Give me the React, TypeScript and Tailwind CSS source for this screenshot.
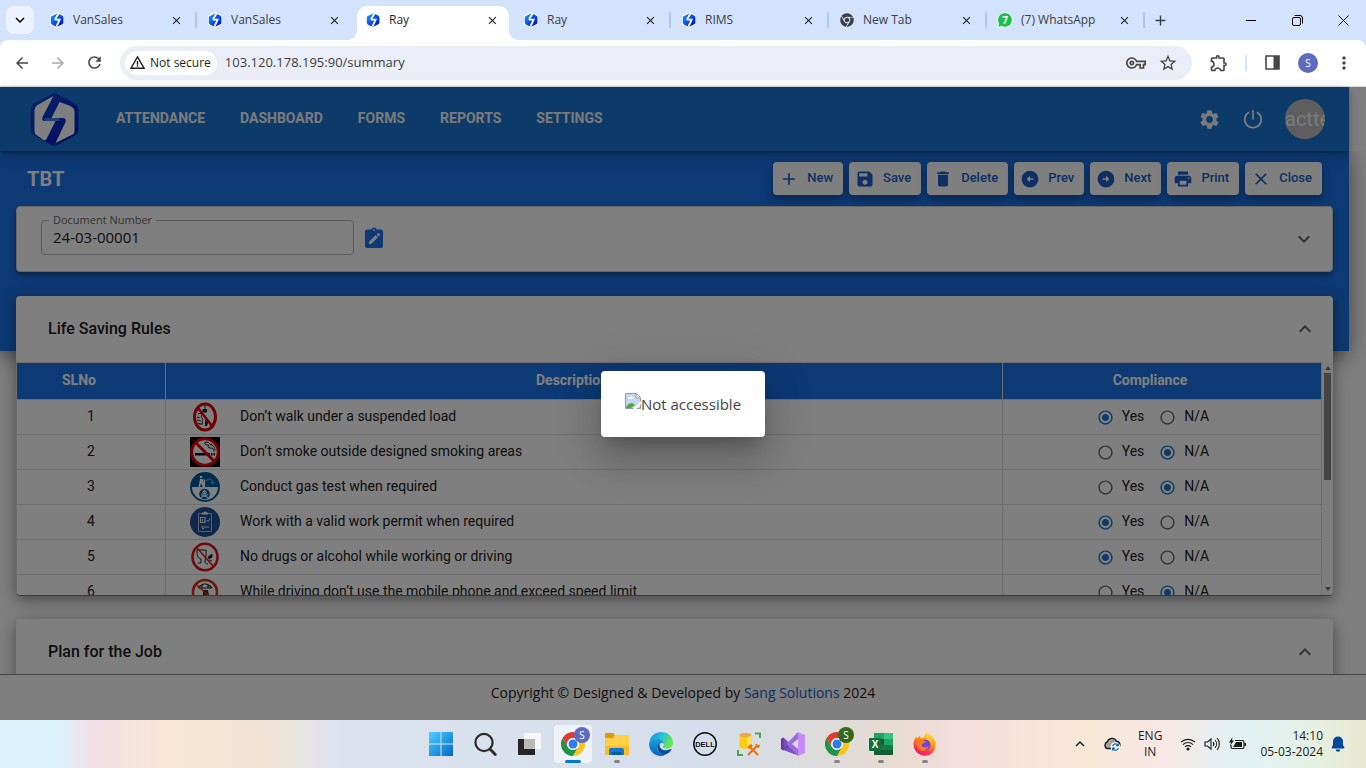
import { ReactNode, useState } from "react";
import { FaChrome } from "react-icons/fa";
import {
  MdAdd,
  MdArrowBack,
  MdArrowCircleLeft,
  MdArrowCircleRight,
  MdArrowForward,
  MdClose,
  MdDelete,
  MdExpandLess,
  MdExpandMore,
  MdMoreVert,
  MdOutlineExtension,
  MdOutlineVpnKey,
  MdPrint,
  MdRadioButtonChecked,
  MdRadioButtonUnchecked,
  MdRefresh,
  MdSave,
  MdSettings,
  MdStarBorder,
  MdWarningAmber,
} from "react-icons/md";

interface ITab {
  title: string;
  icon: ReactNode;
  active?: boolean;
}

interface IRule {
  id: number;
  text: string;
  sign: ReactNode;
  compliance: "Yes" | "N/A";
}

/* ---------- Logos ---------- */

const Favicon = () => (
  <svg viewBox="0 0 16 16" className="w-4 h-4 shrink-0">
    <defs>
      <linearGradient id="fav" x1="0" y1="0" x2="1" y2="1">
        <stop offset="0" stopColor="#1aa0ff" />
        <stop offset="1" stopColor="#0000c8" />
      </linearGradient>
    </defs>
    <path d="M8 0 15 3.5v9L8 16 1 12.5v-9z" fill="#fff" />
    <path d="M8.6 1.2 2.4 4.2 1.8 5v6l1 1.6 5 2.4 6-3 .6-1V5l-.8-1.2z" fill="url(#fav)" />
    <path d="M9.8 1 6.4 6.6 6.6 7.6h4L7.4 14.6" fill="none" stroke="#fff" strokeWidth="1.8" />
  </svg>
);

const SangLogo = () => (
  <svg viewBox="0 0 48 54" className="w-[49px] h-[54px]">
    <defs>
      <linearGradient id="sang" x1="0" y1="0" x2="1" y2="1">
        <stop offset="0" stopColor="#0a50c8" />
        <stop offset="0.5" stopColor="#0a30d0" />
        <stop offset="1" stopColor="#0418b8" />
      </linearGradient>
    </defs>
    <path d="M21 2q3-2 6 0l18 10q3 2 3 5v21q0 3-3 5L27 53q-3 1-6 0L3 43q-3-2-3-5V17q0-3 3-5z" fill="url(#sang)" />
    <path d="M23 4 7 13q-3 2-3 5v21q0 3 2 4l7 5q2 1 3-1l9-18H14q-3 0-2-4z" fill="#fff" />
    <path d="m29 10 11 4q4 2 4 6v19q0 3-3 4l-16 8 10-21q1-4-3-4H21z" fill="#fff" />
    <path d="M14 27.500h15" stroke="#3f7fe0" strokeWidth="3" />
  </svg>
);

const ChromeLogo = () => (
  <svg viewBox="0 0 48 48" className="w-6 h-6">
    <path d="M13.6 30 3.2 12A24 24 0 0 0 24 48l10.4-18A12 12 0 0 1 13.6 30z" fill="#1e9546" />
    <path d="M34.4 30 24 48a24 24 0 0 0 20.8-36H24a12 12 0 0 1 10.4 18z" fill="#fcc31e" />
    <path d="M24 12h20.8A24 24 0 0 0 3.2 12l10.4 18A12 12 0 0 1 24 12z" fill="#e33b2e" />
    <circle cx="24" cy="24" r="11.5" fill="#fff" />
    <circle cx="24" cy="24" r="9" fill="#2f7bf0" />
  </svg>
);

const WindowsLogo = () => (
  <svg viewBox="0 0 24 24" className="w-6 h-6">
    <defs>
      <linearGradient id="win" x1="0" y1="0" x2="1" y2="1">
        <stop offset="0" stopColor="#4fd0ff" />
        <stop offset="1" stopColor="#0067c8" />
      </linearGradient>
    </defs>
    <path d="M0 0h11.5v11.5H0zM12.5 0H24v11.5H12.5zM0 12.5h11.5V24H0zM12.5 12.5H24V24H12.5z" fill="url(#win)" />
  </svg>
);

const SearchLogo = () => (
  <svg viewBox="0 0 24 24" className="w-6 h-6" fill="none" stroke="#2b2b2b" strokeLinecap="round">
    <circle cx="11" cy="10.5" r="8.6" strokeWidth="2.2" />
    <path d="m17.5 17.5 4.8 5" strokeWidth="2.8" />
  </svg>
);

const TaskViewLogo = () => (
  <svg viewBox="0 0 24 24" className="w-6 h-6">
    <rect x="7" y="1" width="17" height="16" fill="#f7f7f7" />
    <rect x="1" y="7" width="17" height="16" fill="#262626" />
    <rect x="7" y="7" width="11" height="10" fill="#b9b9b9" />
  </svg>
);

const FolderLogo = () => (
  <svg viewBox="0 0 24 24" className="w-6 h-6">
    <path d="M0 2q0-1 1-1h7l2 2-2 4H0z" fill="#dd9a0b" />
    <path d="M0 6h8l2-3h14v20H0z" fill="#ffcf48" />
    <path d="M0 14h24v9H0z" fill="#fbbd2a" />
    <path d="M4 23v-5q0-2 2-2h11q2 0 2 2v5z" fill="#0f78d0" />
    <path d="M7 20h9v3H7z" fill="#0b59a5" />
  </svg>
);

const EdgeLogo = () => (
  <svg viewBox="0 0 24 24" className="w-6 h-6">
    <defs>
      <linearGradient id="edgeTop" x1="0" y1="0" x2="1" y2="0.4">
        <stop offset="0" stopColor="#0f8fe0" />
        <stop offset="0.55" stopColor="#28c3d8" />
        <stop offset="1" stopColor="#65e84c" />
      </linearGradient>
      <linearGradient id="edgeLeft" x1="0" y1="0" x2="0" y2="1">
        <stop offset="0" stopColor="#1b9fe2" />
        <stop offset="1" stopColor="#0c5fc0" />
      </linearGradient>
    </defs>
    <path d="M.3 10.5C1.2 4 6.400 0 12 0c7 0 12 5 12 10.500 0 4-3 6-6.200 6-2.600 0-4-.8-4-1.700 0-.7 1-1.200 1-3C14.800 9 12 7 8.600 7 4.500 7 1.200 9 .3 10.500z" fill="url(#edgeTop)" />
    <path d="M.1 12C.1 9 4 6.700 8.200 6.700c4 0 6.600 2.600 6.600 5C14 10.500 9 10 8.500 15.500c-.3 4 3 7.500 7.500 7.200C14.800 23.600 13.300 24 12 24 5 24 0 18.500.1 12z" fill="url(#edgeLeft)" />
    <path d="M8.500 14.500c-.3 5 3.500 9 7.500 8.300 3-.8 5.200-3 6.500-5.200.3-.6-.2-.8-.7-.5-4 2-10.500 1.500-11.200-3.700-.2-1.300.6-2.400 1.400-3-2 .4-3.400 2-3.500 4.100z" fill="#0d4f94" />
  </svg>
);

const DellLogo = () => (
  <svg viewBox="0 0 24 24" className="w-6 h-6">
    <circle cx="12" cy="12" r="11.2" fill="none" stroke="#111" strokeWidth="1.5" />
    <text x="12" y="14.700" textAnchor="middle" fontSize="7.500" fontWeight="700" fontFamily="Liberation Sans, sans-serif" fill="#111">DELL</text>
  </svg>
);

const SsmsLogo = () => (
  <svg viewBox="0 0 24 24" className="w-6 h-6">
    <path d="M18 1.500h5V6M1 18v5h5" fill="none" stroke="#4da64d" strokeWidth="2" />
    <path d="M2.500 3v12.500c0 1.500 12 1.500 12 0V3z" fill="#fccb12" />
    <path d="M10 3v13.500c3 0 4.500-.5 4.500-1V3z" fill="#ffdf55" />
    <ellipse cx="8.500" cy="3" rx="6" ry="2.200" fill="#efa64a" />
    <path d="m11 23 9-9M12 14l9 9" stroke="#e8730c" strokeWidth="2" />
    <path d="m18 12 1 3 3 1 1-3M10 15l4-3 2 2-4 3z" fill="#e8730c" />
  </svg>
);

const VisualStudioLogo = () => (
  <svg viewBox="0 0 24 24" className="w-6 h-6">
    <path d="M0 7 2.500 5.500 16 18l-.5 5L2.500 18 0 17z" fill="#7d4fc0" />
    <path d="M0 17 2.500 18.500 17 6V1L2.500 18 0 17z" fill="#5b3b98" />
    <path d="M0 7v10l2.500 1.500V5.500z" fill="#5b3b98" />
    <path d="M17 0 5.500 12 17 24z" fill="#9b6be0" />
    <path d="M17 7v10l-6-5z" fill="#d6dfec" />
    <path d="m17 0 7 3v18l-7 3z" fill="#c58cf7" />
  </svg>
);

const ExcelLogo = () => (
  <svg viewBox="0 0 24 24" className="w-6 h-6">
    <path d="M5 1h10v6H5z" fill="#21a366" />
    <path d="M15 1h9v6h-9z" fill="#33c481" />
    <path d="M5 7h10v6H5zM5 18h19v5H5z" fill="#185c37" />
    <path d="M15 7h9v6h-9z" fill="#21a366" />
    <path d="M5 13h19v5H5z" fill="#107c41" />
    <rect y="6" width="12" height="13" rx="1" fill="#0f7038" />
    <text x="6" y="16" textAnchor="middle" fontSize="10" fontWeight="700" fontFamily="Liberation Sans, sans-serif" fill="#fff">X</text>
  </svg>
);

const FirefoxLogo = () => (
  <svg viewBox="0 0 24 24" className="w-6 h-6">
    <defs>
      <linearGradient id="fox" x1="0.8" y1="0" x2="0.3" y2="1">
        <stop offset="0" stopColor="#fff044" />
        <stop offset="0.4" stopColor="#ff980e" />
        <stop offset="0.75" stopColor="#ff3647" />
        <stop offset="1" stopColor="#e31587" />
      </linearGradient>
    </defs>
    <path d="M13.500 0c1.500 3 7.500 4 8.800 9.500 2 8-3.600 14.300-10.300 14.300C5.500 23.800.600 19 .600 12.600.600 9 2 6 3.300 4.800l.7 2C5 5 6.500 4 7.200 3.500c0 1 .3 2 1 2.700C11 6 12 3 13.500 0z" fill="url(#fox)" />
    <circle cx="12" cy="13" r="5.500" fill="#7542e5" />
    <path d="M4 8c3-1.500 5-1 6.500.8C13 8.500 13 10 11 11c-1 .5-2.500.5-2.300 2.300.5 2.500 4.600 2.700 6.800 1-1 3.700-4 5.200-7 4.400C4 17.500 2.500 12 4 8z" fill="#ff7a18" />
    <path d="M14 3c1 4 6 5 5.500 11-.5-3-2.500-6-5-6.500-1.500-1-1.500-3-.5-4.500z" fill="#ffd235" />
  </svg>
);

/* ---------- Small icons ---------- */

const EditDocIcon = () => (
  <svg viewBox="0 0 24 24" className="w-6 h-6">
    <path d="M19 3.500h-4.200a3 3 0 0 0-5.600 0H5a2 2 0 0 0-2 2V20a2 2 0 0 0 2 2h14a2 2 0 0 0 2-2V5.500a2 2 0 0 0-2-2z" fill="#1a73e8" />
    <circle cx="12" cy="4.200" r="0.900" fill="#fff" />
    <path d="M7 18v-2.200l6.800-6.800 2.200 2.200L9.200 18zM14.600 8.200l1-1q.6-.5 1.200 0l1 1q.5.6 0 1.200l-1 1z" fill="#fff" />
  </svg>
);

const PowerIcon = () => (
  <svg viewBox="0 0 20 20" className="w-5 h-5" fill="none" stroke="#fff" strokeWidth="1.600">
    <path d="M10 1v9.500M6 3.200a8.300 8.300 0 1 0 8 0" />
  </svg>
);

const BrokenImage = () => (
  <svg viewBox="0 0 16 16" className="w-4 h-4">
    <path d="M.5.500h11l4 4v11H.5z" fill="#c6d6f5" stroke="#9a9a9a" />
    <path d="M11 .500v4.500h4.500" fill="#fff" stroke="#9a9a9a" />
    <path d="M3 6q0-2 2-2 1-1.500 2.500 0Q9 4 9 6z" fill="#fff" />
    <path d="M1 15c1-4 4-5.500 7-4.500l2 1.500-4 3z" fill="#4da83a" />
    <path d="M8 16 16 8v3l-5 5z" fill="#fff" />
  </svg>
);

const OneDriveIcon = () => (
  <svg viewBox="0 0 18 16" className="w-[18px] h-4">
    <path d="M4 12.500a3.500 3.500 0 0 1 .2-6.500 5 5 0 0 1 9.300-.8A3.700 3.700 0 0 1 14 12.500z" fill="#a5a5a5" stroke="#1c1c1c" strokeWidth="1.400" />
    <circle cx="12.500" cy="11" r="4.800" fill="#fff" />
    <path d="M9.600 10.200a3 3 0 0 1 5.400-1M15.400 7.200v2.400H13M15.400 11.800a3 3 0 0 1-5.400 1M9.600 14.600v-2.400H12" fill="none" stroke="#0f6cbd" strokeWidth="1.300" />
  </svg>
);

const WifiIcon = () => (
  <svg viewBox="0 0 16 14" className="w-4 h-[14px]" fill="none" stroke="#1c1c1c" strokeWidth="1.100">
    <path d="M1 5.200a10 10 0 0 1 14 0M3 7.600a7 7 0 0 1 10 0M5 9.900a4.200 4.200 0 0 1 6 0" />
    <circle cx="8" cy="12" r="1" fill="#1c1c1c" />
  </svg>
);

const SoundIcon = () => (
  <svg viewBox="0 0 17 14" className="w-[17px] h-[14px]" fill="none" stroke="#1c1c1c" strokeWidth="1.100">
    <path d="M1 5h2.500L7 2v10L3.500 9H1zM9 5a3 3 0 0 1 0 4M11 3a6 6 0 0 1 0 8M13.200 1.200a9 9 0 0 1 0 11.600" />
  </svg>
);

const BatteryIcon = () => (
  <svg viewBox="0 0 17 14" className="w-[17px] h-[14px]">
    <path d="M6 3.500h7.500a1.500 1.500 0 0 1 1.500 1.500v5a1.500 1.500 0 0 1-1.500 1.500h-10A1.500 1.500 0 0 1 2 10V8" fill="none" stroke="#1c1c1c" strokeWidth="1.200" />
    <path d="M5 8.500 7 5h6v5H4z" fill="#1c1c1c" />
    <path d="M3.500 0 0 5.500h2L1 9l4-5.500H3z" fill="#1c1c1c" />
    <path d="M15.500 6H17v3h-1.500z" fill="#1c1c1c" />
  </svg>
);

const BellIcon = () => (
  <svg viewBox="0 0 14 16" className="w-[14px] h-4" fill="#00479d">
    <path d="M7 .500a5 5 0 0 1 5 5V9l1.300 2.300q.4 1-.6 1.200H1.300q-1-.2-.6-1.200L2 9V5.500a5 5 0 0 1 5-5zM4.800 13.500h4.400a2.200 2.200 0 0 1-4.400 0z" />
  </svg>
);

const WhatsAppIcon = () => (
  <svg viewBox="0 0 16 16" className="w-4 h-4 shrink-0">
    <path d="M8 .500a7.400 7.400 0 1 1-3.600 13.900L.500 15.500l1.100-3.700A7.400 7.400 0 0 1 8 .500z" fill="#1bc149" stroke="#fff" />
    <text x="8.200" y="11.500" textAnchor="middle" fontSize="10" fontWeight="700" fontFamily="Open Sans, sans-serif" fill="#fff">7</text>
  </svg>
);

/* ---------- Safety signs ---------- */

const SuspendedLoadSign = () => (
  <svg viewBox="0 0 30 30" className="w-[30px] h-[30px]">
    <path d="M12.500 7h4.500v3.500h-4.500zM15 18h3v3l-1 3h-2z" fill="#222" />
    <path d="M15 2v5" stroke="#222" />
    <path d="M8 12l3-1 1 2-1 2 2 2-1 2 1 3H9M7 15l3 1M7 18l4 1M8 21l3 1" fill="none" stroke="#333" />
    <ellipse cx="15" cy="15" rx="10.500" ry="13" fill="none" stroke="#e00010" strokeWidth="3" />
    <path d="m8 6 14 18" stroke="#e00010" strokeWidth="2.500" />
  </svg>
);

const SmokingSign = () => (
  <svg viewBox="0 0 30 30" className="w-[30px] h-[30px]">
    <path d="M0 0h30v30H0z" fill="#000" />
    <circle cx="15" cy="15" r="13" fill="#fff" />
    <path d="M5 16h15v2.500H5zM21 16h1.500v2.500H21zM23.500 16H25v2.500h-1.500z" fill="#111" />
    <path d="M24 14.500c0-3-2-3.500-4-3.500s-2.500-2-1-3c-3 0-5-1-4-2.500 2-1 5 0 5 2 3 0 5 3 5 6" fill="none" stroke="#111" strokeWidth="1" />
    <circle cx="15" cy="15" r="13.300" fill="none" stroke="#e00008" strokeWidth="3" />
    <path d="m6 6 18 18" stroke="#e00008" strokeWidth="3" />
  </svg>
);

const GasTestSign = () => (
  <svg viewBox="0 0 30 30" className="w-[30px] h-[30px]">
    <circle cx="15" cy="15" r="15" fill="#005a9c" />
    <path d="M2 15h26a13 13 0 0 1-26 0z" fill="#fff" />
    <circle cx="14.500" cy="22" r="5.300" fill="#005a9c" />
    <circle cx="14.500" cy="20.500" r="2.200" fill="#fff" />
    <path d="m11 22.500 7 3M18 22.500l-7 3" stroke="#fff" strokeWidth="1.200" />
    <circle cx="13.700" cy="20.500" r=".6" fill="#005a9c" />
    <circle cx="15.500" cy="20.500" r=".6" fill="#005a9c" />
    <circle cx="11" cy="5" r="1.300" fill="#fff" />
    <path d="M10 7h2.500l1.500 4 .5 4h-1.500l-2-4-1 4H8.500z" fill="#fff" />
    <path d="M12 8h2.500v7" fill="none" stroke="#fff" strokeWidth="1.200" />
    <path d="M16 9c2-3 7-2 7 2M21 10l2 2 1-2" fill="none" stroke="#5f9cc8" strokeWidth="1.200" />
  </svg>
);

const WorkPermitSign = () => (
  <svg viewBox="0 0 30 30" className="w-[30px] h-[30px]">
    <circle cx="15" cy="15" r="15" fill="#1c4e94" />
    <path d="M8.500 6.500h13v18h-13z" fill="none" stroke="#a9bfe0" />
    <path d="M12 5.500h2q1-3 2 0h2v2h-6z" fill="#fff" />
    <path d="M10.500 10.500h4.500v5h-4.500z" fill="none" stroke="#e8eefa" strokeWidth="1.200" />
    <path d="M12.500 12v2.500M17 13l1 1.500 2-3M11 20h8M12 21.500h2" fill="none" stroke="#e8eefa" strokeWidth="1" />
  </svg>
);

const NoAlcoholSign = () => (
  <svg viewBox="0 0 30 30" className="w-[30px] h-[30px]">
    <path d="M7 8h9v5c0 3-1 4-1 6s1 3 3 3M7 8c0 5 0 8 4 9v4H8" fill="none" stroke="#222" />
    <path d="M18 15l4-3v3l-3 2zM19 18l3 1" fill="#222" stroke="#222" strokeWidth=".8" />
    <ellipse cx="15" cy="15" rx="12.500" ry="13.300" fill="none" stroke="#e0101c" strokeWidth="2.600" />
    <path d="m7 6 16 18" stroke="#e0101c" strokeWidth="1.500" />
  </svg>
);

const NoPhoneSign = () => (
  <svg viewBox="0 0 30 30" className="w-[30px] h-[30px]">
    <path d="M8 11q7-8 14 0M9 11h12M12 8v3M18 8v3" fill="none" stroke="#222" strokeWidth="1.200" />
    <path d="M13 13h5l1 6h-6z" fill="#222" />
    <circle cx="15" cy="15" r="12" fill="none" stroke="#dd3311" strokeWidth="2.600" />
    <path d="m7 8 16 15" stroke="#dd3311" strokeWidth="1.500" />
  </svg>
);

/* ---------- Data ---------- */

const tabs: ITab[] = [
  { title: "VanSales", icon: <Favicon /> },
  { title: "VanSales", icon: <Favicon /> },
  { title: "Ray", icon: <Favicon />, active: true },
  { title: "Ray", icon: <Favicon /> },
  { title: "RIMS", icon: <Favicon /> },
  { title: "New Tab", icon: <FaChrome className="w-[14px] h-[14px] mx-px shrink-0 text-[#3c4043]" /> },
  { title: "(7) WhatsApp", icon: <WhatsAppIcon /> },
];

const navLinks = ["ATTENDANCE", "DASHBOARD", "FORMS", "REPORTS", "SETTINGS"];

const actions = [
  { label: "New", icon: <MdAdd size={20} /> },
  { label: "Save", icon: <MdSave size={20} /> },
  { label: "Delete", icon: <MdDelete size={20} /> },
  { label: "Prev", icon: <MdArrowCircleLeft size={20} /> },
  { label: "Next", icon: <MdArrowCircleRight size={20} /> },
  { label: "Print", icon: <MdPrint size={20} /> },
  { label: "Close", icon: <MdClose size={20} /> },
];

const rules: IRule[] = [
  { id: 1, text: "Don’t walk under a suspended load", sign: <SuspendedLoadSign />, compliance: "Yes" },
  { id: 2, text: "Don’t smoke outside designed smoking areas", sign: <SmokingSign />, compliance: "N/A" },
  { id: 3, text: "Conduct gas test when required", sign: <GasTestSign />, compliance: "N/A" },
  { id: 4, text: "Work with a valid work permit when required", sign: <WorkPermitSign />, compliance: "Yes" },
  { id: 5, text: "No drugs or alcohol while working or driving", sign: <NoAlcoholSign />, compliance: "Yes" },
  { id: 6, text: "While driving don’t use the mobile phone and exceed speed limit", sign: <NoPhoneSign />, compliance: "N/A" },
];

const taskbarApps = [
  { name: "Start", icon: <WindowsLogo /> },
  { name: "Search", icon: <SearchLogo /> },
  { name: "Task View", icon: <TaskViewLogo /> },
  { name: "Chrome", icon: <ChromeLogo />, badge: "bg-[#5c6bc0]", current: true },
  { name: "Explorer", icon: <FolderLogo />, running: true },
  { name: "Edge", icon: <EdgeLogo /> },
  { name: "Dell", icon: <DellLogo /> },
  { name: "SQL Server", icon: <SsmsLogo /> },
  { name: "Visual Studio", icon: <VisualStudioLogo /> },
  { name: "Chrome (work)", icon: <ChromeLogo />, badge: "bg-[#33691e]", running: true },
  { name: "Excel", icon: <ExcelLogo />, running: true },
  { name: "Firefox", icon: <FirefoxLogo />, running: true },
];

/* ---------- Browser chrome ---------- */

const BrowserTab = ({ title, icon, active }: ITab) => (
  <div className="relative w-[158px] h-full flex items-center">
    <div
      className={
        active
          ? "relative flex-1 mx-[3px] mt-[6px] h-[34px] pb-[6px] pl-2 pr-[10px] flex items-center rounded-t-[10px] bg-white text-[#1f1f1f]"
          : "flex-1 pl-[11px] pr-[13px] flex items-center text-[#3c4043]"
      }
    >
      {active && (
        <>
          <span className="absolute bottom-0 -left-[10px] w-[10px] h-[10px] bg-[radial-gradient(circle_at_0_0,transparent_10px,#fff_10px)]" />
          <span className="absolute bottom-0 -right-[10px] w-[10px] h-[10px] bg-[radial-gradient(circle_at_100%_0,transparent_10px,#fff_10px)]" />
        </>
      )}
      {icon}
      <span className="ml-2 flex-1 text-[12px] leading-4 truncate">{title}</span>
      <button type="button" aria-label={`Close ${title}`}>
        <MdClose size={13} className="text-[#1f1f1f]" />
      </button>
    </div>
  </div>
);

const TabStrip = () => (
  <div className="h-10 flex items-center bg-[#d3e3fd]">
    <button type="button" aria-label="Search tabs" className="ml-[6px] mr-1 w-7 h-7 shrink-0 rounded-lg bg-[#ecf2fe] flex items-center justify-center">
      <MdExpandMore size={18} />
    </button>
    {tabs.map((tab, i) => (
      <div key={i} className="h-full flex items-center">
        <BrowserTab {...tab} />
        <span className={[0, 3, 4, 5, 6].includes(i) ? "-mx-px w-[2px] h-4 bg-[#a8c7fa]" : "hidden"} />
      </div>
    ))}
    <button type="button" aria-label="New tab" className="ml-2">
      <MdAdd size={17} className="text-[#3c4043]" />
    </button>
    <div className="ml-auto flex">
      <button type="button" aria-label="Minimize" className="w-[46px] flex items-center justify-center">
        <span className="w-[10px] h-px bg-black" />
      </button>
      <button type="button" aria-label="Restore" className="w-[46px] flex items-center justify-center">
        <svg viewBox="0 0 11 11" className="w-[11px] h-[11px]" fill="none" stroke="#000">
          <rect x=".5" y="2.500" width="8" height="8" rx="1.500" />
          <path d="M2.500.500H8A2.500 2.500 0 0 1 10.500 3v5.500" />
        </svg>
      </button>
      <button type="button" aria-label="Close window" className="w-[46px] flex items-center justify-center">
        <svg viewBox="0 0 11 11" className="w-[11px] h-[11px]" stroke="#000">
          <path d="m.5.500 10 10m0-10-10 10" />
        </svg>
      </button>
    </div>
  </div>
);

const Toolbar = () => (
  <div className="bg-[#d3e3fd]">
    <div className="h-[47px] pb-px pl-[13px] flex items-center rounded-t-lg bg-white border-b border-[#dedede] text-[#474747]">
      <button type="button" aria-label="Back" className="w-9">
        <MdArrowBack size={18} />
      </button>
      <button type="button" aria-label="Forward" className="w-9 text-[#a9a9a9]">
        <MdArrowForward size={18} />
      </button>
      <button type="button" aria-label="Reload" className="w-[35px]">
        <MdRefresh size={19} />
      </button>
      <div className="flex-1 h-[34px] pl-[5px] pr-[14px] flex items-center rounded-full bg-[#ebeef7]">
        <span className="h-6 pl-1 pr-[6px] flex items-center gap-1 rounded-full bg-white text-[12px] text-[#1f1f1f] whitespace-nowrap">
          <MdWarningAmber size={17} />
          Not secure
        </span>
        <input
          type="text"
          aria-label="Address"
          defaultValue="103.120.178.195:90/summary"
          className="flex-1 ml-2 bg-transparent text-[13px] text-[#3c4043] outline-none"
        />
        <MdOutlineVpnKey size={20} />
        <MdStarBorder size={20} className="ml-3" />
      </div>
      <button type="button" aria-label="Extensions" className="ml-[17px]">
        <MdOutlineExtension size={20} />
      </button>
      <span className="ml-4 w-[2px] h-4 bg-[#d3e3fd]" />
      <button type="button" aria-label="Side panel" className="ml-[18px]">
        <svg viewBox="0 0 15 15" className="w-[15px] h-[15px]">
          <path d="M1 1h13v13H1z" fill="none" stroke="#474747" strokeWidth="1.600" />
          <path d="M8.500 1H14v13H8.500z" fill="#474747" />
        </svg>
      </button>
      <button type="button" className="ml-[18px] w-5 h-5 rounded-full bg-[#5c6bc0] text-white text-[10px] leading-5">
        S
      </button>
      <button type="button" aria-label="Menu" className="ml-4 mr-3">
        <MdMoreVert size={20} />
      </button>
    </div>
  </div>
);

/* ---------- Application ---------- */

const Navbar = () => (
  <header className="relative z-10 h-16 mr-[17px] pl-[30px] pr-6 flex items-center bg-[#1976d2] shadow-[0_2px_4px_-1px_rgba(0,0,0,0.3),0_4px_12px_rgba(0,0,0,0.25)]">
    <SangLogo />
    <nav className="ml-[37px] pb-[2px] flex gap-[35px] text-sm font-bold text-[#f5f5f5]">
      {navLinks.map((link) => (
        <a key={link} href="#">
          {link}
        </a>
      ))}
    </nav>
    <div className="ml-auto flex items-center">
      <button type="button" aria-label="Settings">
        <MdSettings size={23} className="text-[#f5f5f5]" />
      </button>
      <button type="button" aria-label="Log out" className="ml-[22px]">
        <PowerIcon />
      </button>
      <span className="ml-[22px] w-10 h-10 rounded-full bg-[#bdbdbd] overflow-hidden flex items-center text-[20px] text-[#f5f5f5]">
        actte
      </span>
    </div>
  </header>
);

const ActionBar = () => (
  <div className="px-[11px] py-[11px] flex items-center justify-between">
    <h1 className="text-[20px] leading-6 font-bold text-white">TBT</h1>
    <div className="flex gap-[6px]">
      {actions.map(({ label, icon }) => (
        <button
          key={label}
          type="button"
          className="h-[33px] pl-[6px] pr-[10px] flex items-center gap-2 rounded bg-white text-[#1a5fc8] text-[13px] font-medium shadow-[0_4px_8px_rgba(0,0,0,0.35)]"
        >
          {icon}
          <span className="pb-[2px]">{label}</span>
        </button>
      ))}
    </div>
  </div>
);

const DocumentCard = () => (
  <section className="h-[66px] pl-6 pr-4 flex items-center rounded border border-[#d0d0d0] bg-white shadow-[0_3px_5px_rgba(0,0,0,0.4)]">
    <div className="relative w-[313px] h-[35px] mb-1">
      <label htmlFor="doc-no" className="absolute -top-2 left-2 px-1 bg-white font-['Open_Sans',sans-serif] text-[11px] leading-4 text-[#666]">
        Document Number
      </label>
      <input
        id="doc-no"
        type="text"
        defaultValue="24-03-00001"
        className="w-full h-full px-[11px] rounded border border-[#b5b5b5] font-['Open_Sans',sans-serif] text-[15px] text-[#222] outline-none"
      />
    </div>
    <button type="button" aria-label="Edit document number" className="ml-2 mb-[2px]">
      <EditDocIcon />
    </button>
    <button type="button" aria-label="Expand" className="ml-auto">
      <MdExpandMore size={24} className="text-[#666]" />
    </button>
  </section>
);

const SectionHeader = ({ title }: { title: string }) => (
  <div className="h-[66px] pl-8 pr-4 flex items-center justify-between">
    <h2 className="text-base font-medium text-[#212121]">{title}</h2>
    <button type="button" aria-label={`Collapse ${title}`}>
      <MdExpandLess size={24} className="text-[#666]" />
    </button>
  </div>
);

interface IRadioProps {
  name: string;
  label: string;
  checked: boolean;
  onSelect: () => void;
}

const Radio = ({ name, label, checked, onSelect }: IRadioProps) => (
  <label className="relative flex items-center gap-2 cursor-pointer">
    <input type="radio" name={name} checked={checked} onChange={onSelect} className="sr-only" />
    {checked ? (
      <MdRadioButtonChecked size={17} className="text-[#1976d2]" />
    ) : (
      <MdRadioButtonUnchecked size={17} className="text-[#666]" />
    )}
    <span className="pb-[2px]">{label}</span>
  </label>
);

const RulesTable = () => {
  const [answers, setAnswers] = useState<Record<number, string>>(
    Object.fromEntries(rules.map((rule) => [rule.id, rule.compliance]))
  );

  return (
    <table className="w-full table-fixed border-collapse text-sm text-[#212121]">
      <thead>
        <tr className="h-[37px] bg-[#1a73e8] text-white">
          <th className="w-[149px] pt-0 pb-[3px] pr-6 border border-[#dcdcdc] font-bold">SLNo</th>
          <th className="pt-0 pb-[3px] pr-6 border border-[#dcdcdc] font-bold">Description</th>
          <th className="w-[319px] pt-0 pb-[3px] pr-6 border border-[#dcdcdc] font-bold">Compliance</th>
        </tr>
      </thead>
      <tbody>
        {rules.map(({ id, text, sign }) => (
          <tr key={id} className="h-[35px]">
            <td className="p-0 pb-[2px] border border-[#dcdcdc] text-center">{id}</td>
            <td className="py-0 pl-6 border border-[#dcdcdc]">
              <div className="flex items-center gap-5">
                {sign}
                <span className="pb-[2px] truncate">{text}</span>
              </div>
            </td>
            <td className="py-0 pr-[18px] border border-[#dcdcdc]">
              <div className="flex justify-center gap-[15px]">
                {["Yes", "N/A"].map((option) => (
                  <Radio
                    key={option}
                    name={`rule-${id}`}
                    label={option}
                    checked={answers[id] === option}
                    onSelect={() => setAnswers({ ...answers, [id]: option })}
                  />
                ))}
              </div>
            </td>
          </tr>
        ))}
      </tbody>
    </table>
  );
};

const Scrollbar = () => (
  <div className="w-[11px] py-1 flex flex-col items-center bg-[#fafafa]">
    <span className="border-x-[3px] border-b-[4px] border-x-transparent border-b-[#777]" />
    <span className="mt-[3px] w-[7px] h-[107px] bg-[#888]" />
    <span className="mt-auto border-x-[3px] border-t-[4px] border-x-transparent border-t-[#777]" />
  </div>
);

const Footer = () => (
  <footer className="relative h-[46px] pb-[10px] flex items-center justify-center border-t border-[#888] bg-white font-['Open_Sans',sans-serif] text-[14px] text-[#212121]">
    <p>
      Copyright © Designed &amp; Developed by{" "}
      <a href="#" className="text-[#1a5fc8]">
        Sang Solutions
      </a>{" "}
      2024
    </p>
  </footer>
);

const Dialog = () => (
  <div className="absolute inset-0 z-20 flex items-center justify-center bg-black/50">
    <div role="dialog" className="h-[66px] px-6 pb-[6px] flex items-center rounded bg-white text-[15px] text-[#444] font-['Open_Sans',sans-serif] shadow-[0_11px_15px_-7px_rgba(0,0,0,0.2),0_24px_38px_3px_rgba(0,0,0,0.14),0_9px_46px_8px_rgba(0,0,0,0.12)]">
      <BrokenImage />
      <span className="pt-2">Not accessible</span>
    </div>
  </div>
);

const Page = () => (
  <div className="relative flex-1 min-h-0 flex flex-col bg-white font-[Roboto,sans-serif]">
    <Navbar />
    <main className="flex-1 min-h-0 overflow-hidden">
      <div className="h-[200px] -mb-[200px] mr-[17px] bg-[#1a73e8] shadow-[0_4px_20px_rgba(0,0,0,0.5)]" />
      <div className="relative ml-4 mr-[33px]">
        <ActionBar />
        <DocumentCard />
        <section className="mt-6 rounded bg-white overflow-hidden border-b border-[#777] shadow-[0_4px_16px_rgba(0,0,0,0.45)]">
          <SectionHeader title="Life Saving Rules" />
          <div className="h-[233px] flex overflow-hidden">
            <div className="flex-1 overflow-hidden">
              <RulesTable />
            </div>
            <Scrollbar />
          </div>
        </section>
        <section className="mt-[23px] pb-10 rounded bg-white shadow-[0_4px_16px_rgba(0,0,0,0.45)]">
          <SectionHeader title="Plan for the Job" />
        </section>
      </div>
    </main>
    <Footer />
    <Dialog />
  </div>
);

/* ---------- Taskbar ---------- */

const Taskbar = () => (
  <div className="h-12 shrink-0 grid grid-cols-[1fr_auto_1fr] items-center bg-[linear-gradient(90deg,#dcf3fb_4%,#f3dfe8_7%,#f6e6d3_12%,#f3e5d3_19%,#dce3ef_25%,#d5deea_52%,#dcdcda_60%,#e9dbd2_66%,#f3dedf_70%,#f9e8d5_79%,#f8e8e6_85%,#e2f1f5_91%,#e5f2ea_95%,#e8e9cd)] text-[#1c1c1c]">
    <span />
    <div className="flex">
      {taskbarApps.map(({ name, icon, badge, current, running }) => (
        <div key={name} className="w-11 h-12 flex items-center justify-center">
          <button
            type="button"
            aria-label={name}
            className={
              current
                ? "relative w-[38px] h-[38px] flex items-center justify-center rounded bg-white/60"
                : "relative w-[38px] h-[38px] flex items-center justify-center"
            }
          >
            {icon}
            {badge && (
              <span className={`absolute top-[2px] right-[2px] w-4 h-4 rounded-full text-[10px] leading-4 text-white ${badge}`}>
                S
              </span>
            )}
            {current && <span className="absolute bottom-0 w-4 h-[3px] rounded-full bg-[#0078d4]" />}
            {running && <span className="absolute bottom-0 w-[6px] h-[3px] rounded-full bg-[#858585]" />}
          </button>
        </div>
      ))}
    </div>
    <div className="flex items-center justify-end pr-[21px]">
      <MdExpandLess size={18} />
      <span className="ml-[14px]">
        <OneDriveIcon />
      </span>
      <span className="ml-[17px] text-center text-[12px] leading-4">
        ENG
        <br />
        IN
      </span>
      <span className="ml-[18px] flex gap-2">
        <WifiIcon />
        <SoundIcon />
        <BatteryIcon />
      </span>
      <span className="ml-[14px] text-right text-[12px] leading-4">
        14:10
        <br />
        05-03-2024
      </span>
      <span className="ml-2">
        <BellIcon />
      </span>
    </div>
  </div>
);

const App = () => {
  return (
    <div className="h-screen flex flex-col overflow-hidden font-['Open_Sans',sans-serif]">
      <TabStrip />
      <Toolbar />
      <Page />
      <Taskbar />
    </div>
  );
};

export default App;
